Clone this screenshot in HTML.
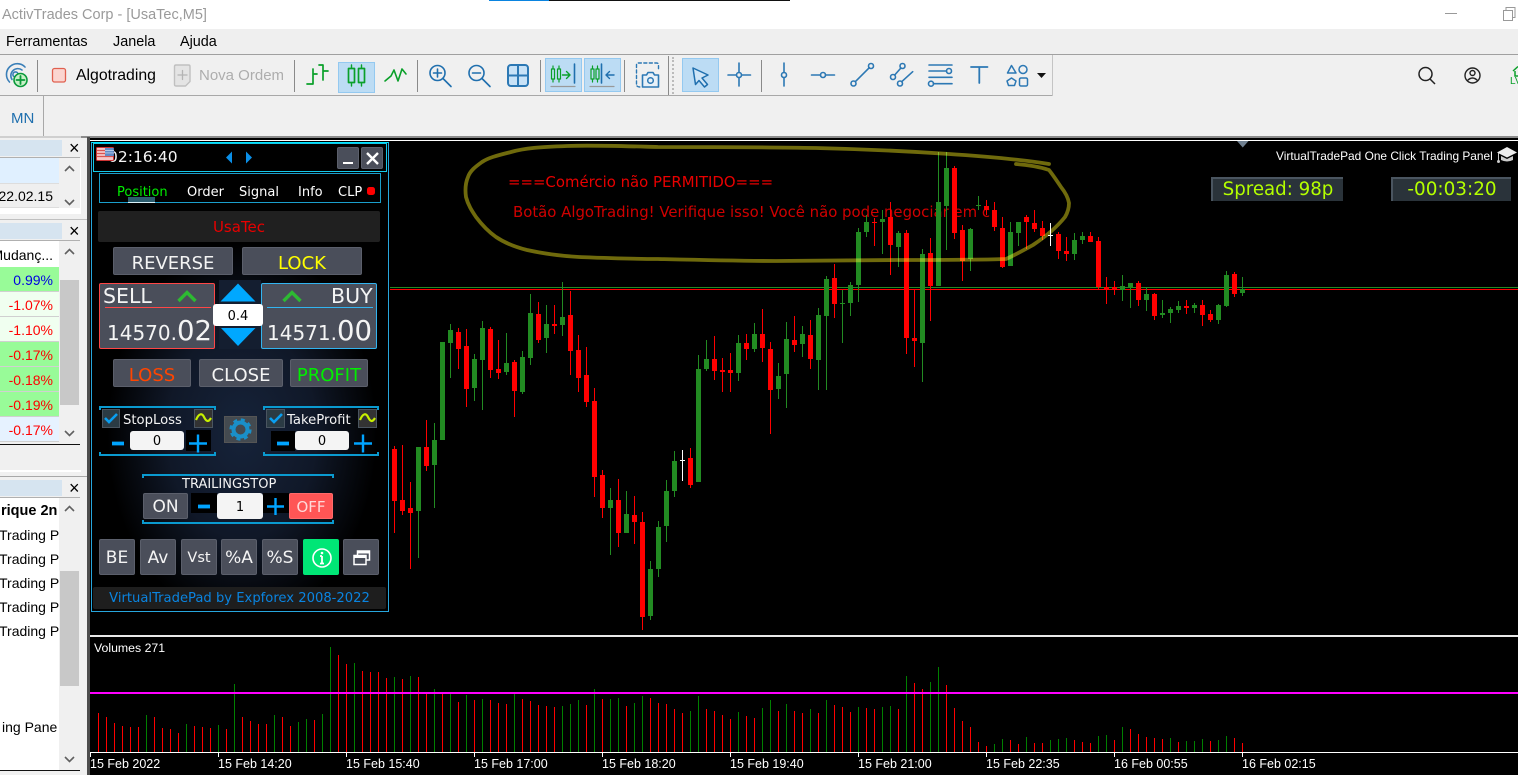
<!DOCTYPE html>
<html lang="pt"><head><meta charset="utf-8"><title>ActivTrades Corp - [UsaTec,M5]</title>
<style>
html,body{margin:0;padding:0;background:#f0f0f0;}
body{position:relative;width:1518px;height:775px;overflow:hidden;font-family:"Liberation Sans",sans-serif;font-size:14px;color:#000;}
div,span{box-sizing:border-box;}
.a{position:absolute;}
.t{position:absolute;white-space:nowrap;}
.sep{position:absolute;width:1px;background:#8a8a8a;}
.sel{position:absolute;background:#bcdcf4;border:1px solid #94c9f0;}
.row{position:absolute;left:0;width:59px;height:24px;text-align:right;padding-right:6px;padding-top:1px;line-height:24px;border-bottom:1px solid #d0d0d0;color:#f00;}
.hd{position:absolute;left:0;width:62px;height:16px;background:#d6e4f0;}
.x{position:absolute;left:69px;font-size:18px;line-height:16px;font-weight:400;}
.tr{position:absolute;left:-1px;white-space:nowrap;line-height:20px;}
.p{font-family:"DejaVu Sans",sans-serif;}
.b{position:absolute;background:#4a4e5a;border:1px solid #5b5f6b;border-radius:2px;color:#f4f4f4;display:flex;align-items:center;justify-content:center;font-family:"DejaVu Sans",sans-serif;white-space:nowrap;padding-top:2px;}
.b.h{padding-top:4px;font-size:18px;}
.w{position:absolute;background:#f4f4f4;border-radius:3px;color:#000;display:flex;align-items:center;justify-content:center;font-family:"DejaVu Sans",sans-serif;font-size:13px;padding-top:2px;}
.ax{position:absolute;top:757px;color:#fff;font-size:12.5px;line-height:15px;white-space:nowrap;}
svg{position:absolute;overflow:visible;}
</style></head><body>

<!-- title bar -->
<div class="a" style="left:0;top:0;width:1518px;height:29px;background:#fff"></div>
<div class="a" style="left:489px;top:0;width:60px;height:1px;background:#0a84e0"></div>
<div class="a" style="left:549px;top:0;width:241px;height:1px;background:#111"></div>
<div class="t" style="left:2px;top:6px;color:#9a9a9a;font-size:14.5px;line-height:18px">ActivTrades Corp - [UsaTec,M5]</div>
<div class="a" style="left:1445px;top:13px;width:12px;height:1px;background:#999"></div>
<svg style="left:1503px;top:7px" width="13" height="14"><path d="M.5 3.5h9v10h-9zM3 3V.5h9v10H10" fill="none" stroke="#999"/></svg>

<!-- menu -->
<div class="a" style="left:0;top:29px;width:1518px;height:25px;background:#efefef"></div>
<div class="t" style="left:6px;top:34px;line-height:16px;font-size:14.4px">Ferramentas</div>
<div class="t" style="left:113px;top:34px;line-height:16px;font-size:14.4px">Janela</div>
<div class="t" style="left:180px;top:34px;line-height:16px;font-size:14.4px">Ajuda</div>
<div class="a" style="left:0;top:54px;width:1518px;height:1px;background:#a0a0a0"></div>

<!-- toolbar -->
<div class="a" style="left:0;top:95px;width:1053px;height:1px;background:#a8a8a8"></div>
<div class="a" style="left:1052px;top:55px;width:1px;height:41px;background:#c4c4c4"></div>
<div class="sep" style="left:37px;top:60px;height:32px"></div>
<div class="sep" style="left:294px;top:60px;height:32px"></div>
<div class="sep" style="left:417px;top:60px;height:32px"></div>
<div class="sep" style="left:540px;top:60px;height:32px"></div>
<div class="sep" style="left:624px;top:60px;height:32px"></div>
<div class="sep" style="left:668px;top:56px;height:39px"></div>
<div class="a" style="left:672px;top:57px;height:37px;border-left:2px dotted #bbb"></div>
<div class="sep" style="left:761px;top:60px;height:32px"></div>
<div class="sel" style="left:338px;top:62px;width:37px;height:31px"></div>
<div class="sel" style="left:545px;top:58px;width:37px;height:34px"></div>
<div class="sel" style="left:584px;top:58px;width:37px;height:34px"></div>
<div class="sel" style="left:682px;top:58px;width:37px;height:34px"></div>

<svg style="left:0;top:55px" width="1053" height="41" fill="none" stroke-linecap="round" stroke-linejoin="round">
 <!-- connect -->
 <g stroke="#3a7fb8" stroke-width="1.6"><path d="M9.5 27A10.5 10.5 0 0 1 25 12"/><path d="M12 24.5A7 7 0 0 1 22 15"/><circle cx="15.5" cy="19.5" r="2.6"/></g>
 <circle cx="20.5" cy="25" r="6.5" fill="#c7f0c7" stroke="#0a9a3a" stroke-width="1.6"/><path d="M20.5 21v8M16.5 25h8" stroke="#0a9a3a" stroke-width="1.8"/>
 <!-- algotrading -->
 <rect x="52.5" y="13.5" width="13" height="13.5" rx="2" fill="#fbd5d0" stroke="#e0604f" stroke-width="1.3"/>
 <!-- nova ordem -->
 <path d="M174.5 11.5q0-1.5 1.5-1.500h12.500q1.500 0 1.500 1.500v15l-4.500 4.500h-9.500q-1.500 0-1.500-1.500z" fill="#e4e4e4" stroke="#c0c0c0" stroke-width="1.4"/><path d="M182.500 15.500v9M178 20h9" stroke="#b4b4b4" stroke-width="1.3"/>
 <!-- bars -->
 <path d="M313 14v15M307 29h6M313 19h4M323 10v15M323 16h5M319 10h4" stroke="#0aa02a" stroke-width="1.7"/>
 <!-- candles -->
 <path d="M351.500 10v21M361.500 10v21" stroke="#0aa02a" stroke-width="1.4"/><rect x="348.500" y="13.500" width="6" height="14" fill="#bcdcf4" stroke="#0aa02a" stroke-width="1.7"/><rect x="358.500" y="13.500" width="6" height="14" fill="#bcdcf4" stroke="#0aa02a" stroke-width="1.7"/>
 <!-- line -->
 <path d="M385 26l6-5 3-6 4 11 4-12 4 5" stroke="#0aa02a" stroke-width="1.6"/>
 <!-- zoom in -->
 <g stroke="#1f6fae" stroke-width="1.6"><circle cx="437.500" cy="18" r="7.500"/><path d="M443 23.500l8 8M433.500 18h8M437.500 14v8"/></g>
 <g stroke="#1f6fae" stroke-width="1.6"><circle cx="476.500" cy="18" r="7.500"/><path d="M482 23.500l8 8M472.500 18h8"/></g>
 <!-- grid -->
 <rect x="508" y="10" width="20" height="21" rx="3" fill="#c8e2f7" stroke="#2c78b4" stroke-width="2"/><path d="M518 10v21M508 20.500h20" stroke="#2c78b4" stroke-width="2"/>
 <!-- shift -->
 <g stroke="#0aa02a" stroke-width="1.2"><path d="M553 11v16M559 11v16"/><rect x="551.500" y="14" width="3" height="10" fill="#bcdcf4"/><rect x="557.500" y="14" width="3" height="10" fill="#bcdcf4"/><path d="M562.500 20h7M566.500 16.500l3.500 3.500-3.500 3.500" stroke-width="1.4"/></g>
 <path d="M574.500 9v19" stroke="#1f6fae" stroke-width="1.6"/><path d="M551 31.500h24" stroke="#999" stroke-width="1.200"/>
 <g stroke="#0aa02a" stroke-width="1.2"><path d="M592.500 11v16M597.500 11v16"/><rect x="591" y="14" width="3" height="10" fill="#bcdcf4"/><rect x="596" y="14" width="3" height="10" fill="#bcdcf4"/></g>
 <path d="M601.500 9v19" stroke="#1f6fae" stroke-width="1.6"/><path d="M606 20h8M609.500 16.500l-3.500 3.500 3.500 3.500" stroke="#1f6fae" stroke-width="1.400"/><path d="M590 31.500h24" stroke="#999" stroke-width="1.200"/>
 <!-- screenshot -->
 <path d="M636.500 29v-19q0-2 2-2h18q2 0 2 2v5M637 31q1 1 3 1" stroke="#2c78b4" stroke-width="1.400" stroke-dasharray="3 2.500"/>
 <path d="M642.500 20h4l1.500-2.500h5l1.500 2.500h4v12h-16z" fill="#e8f1f8" stroke="#2c78b4" stroke-width="1.600"/><circle cx="650.500" cy="25.500" r="2.800" stroke="#2c78b4" stroke-width="1.500"/>
 <!-- arrow -->
 <path d="M693 13l15 7-6 3 5.500 6.500-3 2.500-5.500-6.500-3.500 4z" fill="#cfe5f6" stroke="#1f6fae" stroke-width="1.500"/>
 <!-- crosshair -->
 <g stroke="#2c78b4" stroke-width="1.600"><circle cx="739" cy="20" r="2.500"/><path d="M739 8v9.500M739 22.500v8.500M728 20h8.500M741.500 20h9"/></g>
 <!-- vertical -->
 <g stroke="#2c78b4" stroke-width="1.600"><circle cx="784" cy="20" r="2.500"/><path d="M784 8v9.500M784 22.500v8.500"/></g>
 <g stroke="#2c78b4" stroke-width="1.600"><circle cx="823" cy="20" r="2.500"/><path d="M811.500 20h9M825.500 20h9"/></g>
 <g stroke="#2c78b4" stroke-width="1.600"><circle cx="853.500" cy="28.500" r="2.500"/><circle cx="871" cy="11" r="2.500"/><path d="M855.300 26.700l14-14"/></g>
 <g stroke="#2c78b4" stroke-width="1.600"><circle cx="893" cy="22" r="2.500"/><circle cx="902.500" cy="11" r="2.500"/><path d="M894.700 20l6.200-7"/><circle cx="900" cy="28.500" r="2.500"/><path d="M901.700 26.700l11-10"/></g>
 <g stroke="#2c78b4" stroke-width="1.600"><path d="M929 10h23M929 16h17.500M929 22.300h23M933.500 28.700h18.500"/><circle cx="949" cy="16" r="2.500"/><circle cx="931" cy="28.700" r="2.500"/></g>
 <path d="M971 12h16.500M979.300 12v16" stroke="#2c78b4" stroke-width="1.800"/>
 <g stroke="#2c78b4" stroke-width="1.500"><path d="M1007.500 18l4-7.500 4.500 7.500z"/><circle cx="1023" cy="14.500" r="4"/><path d="M1011.500 23l4.500 3-1.500 4.500h-6L1007 26z"/><rect x="1019.500" y="23" width="8" height="8" rx="1.500"/></g>
 <path d="M1037 18h9l-4.500 5z" fill="#111"/>
</svg>
<div class="t" style="left:76px;top:67px;font-size:15.8px;line-height:18px">Algotrading</div>
<div class="t" style="left:199px;top:67px;font-size:15px;line-height:18px;color:#adadad">Nova Ordem</div>

<!-- right icons -->
<svg style="left:1415px;top:62px" width="103" height="32" fill="none">
 <circle cx="10.500" cy="12" r="6.500" stroke="#222" stroke-width="1.500"/><path d="M15 17l5 5" stroke="#222" stroke-width="1.500"/>
 <circle cx="57.500" cy="13.500" r="7.500" stroke="#222" stroke-width="1.400"/><circle cx="57.500" cy="11" r="2.500" stroke="#222" stroke-width="1.400"/><path d="M52 19q5.500-6 11 0" stroke="#222" stroke-width="1.400"/>
 <path d="M98 9l5-4.500M100 9v5h4" stroke="#0aa02a" stroke-width="1.500"/>
</svg>
<div class="t" style="left:1510px;top:76px;font-size:10px;line-height:11px;color:#0aa02a">LV</div>

<!-- row 2 -->
<div class="sep" style="left:43px;top:96px;height:40px;background:#a8a8a8"></div>
<div class="t" style="left:11px;top:110px;font-size:15px;line-height:18px;color:#1f6fae">MN</div>
<div class="a" style="left:0;top:136px;width:1518px;height:2px;background:#8c8c8c"></div>
<div class="a" style="left:0;top:136px;width:81px;height:2px;background:#cfcfcf"></div>

<!-- left panels -->
<div class="a" style="left:0;top:138px;width:87px;height:637px;background:#f0f0f0"></div>
<div class="a" style="left:87px;top:137px;width:3px;height:638px;background:#4d4d4d"></div>

<div class="hd" style="top:140px"></div>
<div class="x" style="top:140px">×</div>
<div class="a" style="left:0;top:157px;width:80px;height:1px;background:#b0b0b0"></div>
<div class="a" style="left:0;top:158px;width:59px;height:25px;background:#e0f0ff"></div>
<div class="a" style="left:0;top:183px;width:59px;height:25px;background:#efefef;border-top:1px solid #ddd;border-bottom:1px solid #ddd"></div>
<div class="t" style="right:1465px;top:187px;line-height:18px;font-size:14px">22.02.15</div>
<div class="a" style="left:0;top:208px;width:81px;height:6px;background:#fff"></div>
<div class="a" style="left:80px;top:158px;width:1px;height:56px;background:#fff"></div>
<div class="a" style="left:0;top:219px;width:87px;height:1px;background:#c0c0c0"></div>

<div class="hd" style="top:223px"></div>
<div class="x" style="top:223px">×</div>
<div class="a" style="left:0;top:240px;width:80px;height:1px;background:#b0b0b0"></div>
<div class="a" style="left:0;top:241px;width:59px;height:26px;background:#fff"></div>
<div class="t" style="right:1465px;top:246px;line-height:18px">Mudanç...</div>
<div class="row" style="top:267px;height:25px;background:#98fb98;color:#0000e0">0.99%</div>
<div class="row" style="top:292px;height:25px;background:#f0fff0">-1.07%</div>
<div class="row" style="top:317px;height:25px;background:#f0fff0">-1.10%</div>
<div class="row" style="top:342px;height:25px;background:#98fb98">-0.17%</div>
<div class="row" style="top:367px;height:25px;background:#98fb98">-0.18%</div>
<div class="row" style="top:392px;height:25px;background:#98fb98">-0.19%</div>
<div class="row" style="top:417px;height:25px;background:#e6f2ff">-0.17%</div>
<div class="a" style="left:60px;top:280px;width:19px;height:125px;background:#c8c8c8"></div>
<div class="a" style="left:0;top:444px;width:80px;height:1px;background:#111"></div>
<div class="a" style="left:0;top:470px;width:81px;height:2px;background:#fff"></div>
<div class="a" style="left:0;top:476px;width:87px;height:1px;background:#a8a8a8"></div>

<div class="hd" style="top:480px"></div>
<div class="x" style="top:480px">×</div>
<div class="a" style="left:0;top:497px;width:80px;height:1px;background:#b0b0b0"></div>
<div class="a" style="left:0;top:498px;height:272px;background:#fff;overflow:hidden;width:59px">
 <div class="tr" style="left:1px;top:3px;font-weight:700;font-size:14.500px">rique 2n</div>
 <div class="tr" style="top:27px">Trading Panel</div>
 <div class="tr" style="top:51px">Trading Panel</div>
 <div class="tr" style="top:75px">Trading Panel</div>
 <div class="tr" style="top:99px">Trading Panel</div>
 <div class="tr" style="top:123px">Trading Panel</div>
 <div class="tr" style="left:2px;top:219px;width:56px;overflow:hidden">ing Panel</div>
</div>
<div class="a" style="left:60px;top:571px;width:19px;height:115px;background:#c8c8c8"></div>
<div class="a" style="left:0;top:770px;width:80px;height:1px;background:#111"></div>
<svg style="left:0;top:0" width="87" height="775" fill="none" stroke="#606060" stroke-width="1.600">
 <path d="M65 171l4.500-4.500 4.500 4.500M65 200l4.500 4.500 4.500-4.500M65 254l4.500-4.500 4.500 4.500M65 431l4.500 4.500 4.500-4.500M65 511l4.500-4.500 4.500 4.500M65 757l4.500 4.500 4.500-4.500"/>
</svg>

<!-- chart -->
<div class="a" style="left:90px;top:138px;width:1428px;height:637px;background:#000"></div>
<div class="a" style="left:90px;top:140px;width:1428px;height:1px;background:#fff"></div>
<div class="a" style="left:90px;top:635px;width:1428px;height:2px;background:#e8e8e8"></div>

<div class="t p" style="left:508px;top:173px;color:#e80000;font-size:14.900px;line-height:18px">===Comércio não PERMITIDO===</div>
<div class="t p" style="left:513px;top:203px;color:#d00000;font-size:14.900px;line-height:18px">Botão AlgoTrading! Verifique isso! Você não pode negociar em c</div>

<svg style="left:0;top:0" width="1518" height="775" fill="none" shape-rendering="crispEdges">
 <path d="M390 287.500H1518" stroke="#228b22"/><path d="M390 289.500H1518" stroke="#f00"/>
 <path stroke="#f00" d="M394.500 446V533M402.500 445V515M410.500 482V569M426.500 420V471M458.500 328V369M466.500 329V407M490.500 327V378M498.500 340V379M514.500 360V417M538.500 302V343M554.500 305V334M570.500 291V375M578.500 335V392M586.500 347V407M594.500 388V497M602.500 470V518M618.500 479V547M634.500 496V544M642.500 512V630M690.500 448V488M714.500 336V380M722.500 358V392M730.500 353V392M746.500 334V360M762.500 309V362M770.500 342V434M794.500 316V352M810.500 320V369M834.500 264V318M874.500 218V246M890.500 202V275M906.500 230V354M914.500 290V367M930.500 238V321M954.500 166V239M962.500 225V281M986.500 200V215M994.500 202V231M1002.500 217V268M1026.500 215V249M1034.500 210V232M1042.500 221V240M1058.500 232V259M1066.500 237V261M1090.500 232V242M1098.500 237V289M1106.500 277V304M1114.500 281V295M1138.500 281V306M1154.500 293V320M1186.500 300V314M1202.500 300V326M1210.500 310V322M1234.500 272V297"/>
 <path stroke="#228b22" d="M418.500 447V558M434.500 423V508M450.500 324V378M474.500 354V401M482.500 321V410M506.500 333V375M522.500 351V394M530.500 294V365M546.500 305V353M562.500 282V336M610.500 488V555M626.500 491V533M650.500 561V620M658.500 521V577M666.500 480V542M674.500 451V497M698.500 355V482M706.500 340V371M738.500 335V381M754.500 323V352M778.500 363V399M786.500 322V408M802.500 326V357M818.500 308V390M826.500 276V390M842.500 290V343M850.500 282V316M858.500 228V302M866.500 215V237M882.500 210V254M898.500 231V267M922.500 249V382M938.500 152V286M946.500 152V250M970.500 228V271M978.500 196V210M1010.500 222V266M1018.500 222V246M1074.500 233V260M1082.500 232V244M1122.500 275V301M1130.500 283V308M1146.500 288V311M1162.500 300V318M1170.500 307V323M1178.500 301V313M1194.500 303V313M1218.500 304V324M1226.500 271V307M1242.500 277V296"/>
 <path stroke="#f00" stroke-width="5" d="M394.500 449V501M402.500 500V511M410.500 508V513M426.500 447V466M458.500 332V349M466.500 346V389M490.500 329V370M498.500 369V373M514.500 362V391M538.500 314V340M554.500 324V326M570.500 315V351M578.500 350V378M586.500 375V402M594.500 401V477M602.500 475V508M618.500 500V533M634.500 515V522M642.500 522V617M690.500 458V485M714.500 359V371M722.500 370V372M730.500 370V373M746.500 343V349M762.500 334V348M770.500 349V390M794.500 340V345M810.500 335V359M834.500 278V304M874.500 222V223M890.500 217V245M906.500 233V338M914.500 338V341M930.500 253V286M954.500 168V233M962.500 230V261M986.500 206V210M994.500 210V227M1002.500 228V267M1026.500 217V222M1034.500 223V229M1042.500 228V236M1058.500 234V251M1066.500 251V254M1090.500 236V242M1098.500 241V287M1106.500 287V289M1114.500 287V289M1138.500 283V300M1154.500 294V316M1186.500 306V308M1202.500 305V315M1210.500 314V320M1234.500 274V294"/>
 <path stroke="#228b22" stroke-width="5" d="M418.500 447V511M434.500 440V465M442.500 342V440M450.500 330V343M474.500 359V388M482.500 328V360M506.500 363V372M522.500 357V392M530.500 313V358M546.500 324V338M562.500 317V325M610.500 500V508M626.500 514V533M650.500 569V616M658.500 527V569M666.500 491V526M674.500 461V491M698.500 369V482M706.500 359V369M738.500 343V373M754.500 334V349M778.500 376V389M786.500 339V374M802.500 334V344M818.500 315V360M826.500 279V316M842.500 303V304M850.500 285V303M858.500 232V285M866.500 222V232M882.500 219V222M898.500 233V247M922.500 254V343M938.500 202V286M946.500 168V206M970.500 229V259M978.500 205V206M1010.500 232V266M1018.500 222V233M1074.500 240V254M1082.500 236V240M1122.500 286V290M1130.500 283V288M1146.500 294V300M1162.500 313V315M1170.500 309V313M1178.500 306V310M1194.500 305V308M1218.500 305V320M1226.500 275V306M1242.500 289V293"/>
 <path stroke="#fff" d="M682.500 450V481M680 460.500H685M1050.500 223V246M1048 235.500H1053"/>
 <!-- volumes -->
 <path stroke="#f00" d="M98.500 713V752M106.500 717V752M114.500 723V752M122.500 726V752M130.500 727V752M138.500 727V752M154.500 717V752M162.500 728V752M170.500 729V752M178.500 733V752M194.500 726V752M202.500 727V752M210.500 728V752M226.500 729V752M242.500 717V752M250.500 721V752M258.500 724V752M266.500 724V752M282.500 717V752M290.500 726V752M314.500 720V752M338.500 655V752M346.500 664V752M362.500 671V752M370.500 672V752M378.500 672V752M386.500 678V752M402.500 679V752M418.500 677V752M426.500 693V752M442.500 693V752M458.500 702V752M474.500 700V752M490.500 700V752M498.500 703V752M506.500 704V752M522.500 699V752M530.500 701V752M538.500 705V752M546.500 706V752M554.500 707V752M586.500 705V752M602.500 699V752M626.500 706V752M650.500 698V752M658.500 703V752M666.500 704V752M674.500 709V752M682.500 713V752M706.500 709V752M714.500 711V752M722.500 715V752M730.500 719V752M746.500 716V752M754.500 718V752M778.500 711V752M794.500 711V752M802.500 713V752M818.500 713V752M834.500 705V752M842.500 707V752M850.500 712V752M866.500 708V752M874.500 709V752M898.500 709V752M914.500 683V752M922.500 689V752M946.500 685V752M954.500 708V752M962.500 721V752M970.500 727V752M978.500 742V752M986.500 746V752M1010.500 740V752M1018.500 744V752M1034.500 743V752M1042.500 743V752M1074.500 740V752M1082.500 742V752M1090.500 743V752M1114.500 740V752M1130.500 729V752M1138.500 734V752M1146.500 737V752M1154.500 738V752M1162.500 739V752M1178.500 742V752M1210.500 741V752M1234.500 738V752M1242.500 743V752"/>
 <path stroke="#008000" d="M146.500 715V752M186.500 724V752M218.500 725V752M234.500 684V752M274.500 715V752M298.500 722V752M306.500 719V752M322.500 714V752M330.500 647V752M354.500 663V752M394.500 677V752M410.500 676V752M434.500 689V752M450.500 694V752M466.500 695V752M482.500 699V752M514.500 694V752M562.500 706V752M570.500 704V752M578.500 700V752M594.500 689V752M610.500 699V752M618.500 698V752M634.500 703V752M642.500 696V752M690.500 711V752M698.500 696V752M738.500 712V752M762.500 708V752M770.500 700V752M786.500 704V752M810.500 709V752M826.500 700V752M858.500 707V752M882.500 707V752M890.500 706V752M906.500 676V752M930.500 682V752M938.500 667V752M994.500 744V752M1002.500 739V752M1026.500 737V752M1050.500 740V752M1058.500 739V752M1066.500 738V752M1098.500 736V752M1106.500 735V752M1122.500 727V752M1170.500 738V752M1186.500 741V752M1194.500 741V752M1202.500 739V752M1218.500 740V752M1226.500 736V752"/>
 <path stroke="#f0f" stroke-width="2" d="M90 693H1518"/>
 <path stroke="#fff" d="M90 752.500H1518M90.500 752V757M218.500 752V757M346.500 752V757M474.500 752V757M602.500 752V757M730.500 752V757M858.500 752V757M986.500 752V757M1114.500 752V757M1242.500 752V757"/>
</svg>

<!-- marker ellipse -->
<svg style="left:0;top:0;mix-blend-mode:screen" width="1518" height="775" fill="none">
 <path d="M1049,164 C1000,156 900,150 816,148 C760,147 700,147 658,147 C620,146 590,145 567,146 C540,147 525,148 511,152 C495,156 488,158 482,162 C475,167 470,171 468,177 C465,184 465,190 466,197 C468,205 472,211 476,217 C482,225 489,232 496,237 C505,243 515,247 527,250 C545,254 560,256 579,257 C605,258 630,259 658,259 C700,260 740,261 776,261 C820,261 860,260 895,260 C930,260 975,260 1006,259 C1015,255 1024,250 1033,245 C1045,237 1057,227 1065,217 C1068,212 1069,208 1069,203 C1068,197 1065,192 1061,187 C1057,181 1053,175 1049,170 C1040,167 1028,165 1016,164" stroke="#6f6a0c" stroke-width="3.800" stroke-linecap="round"/>
</svg>

<!-- chart labels -->
<svg style="left:1237px;top:141px" width="12" height="7"><path d="M0 0h11.500L5.750 6.500z" fill="#708090"/></svg>
<div class="t" style="left:1276px;top:148px;color:#fff;font-size:11.900px;line-height:16px">VirtualTradePad One Click Trading Panel</div>
<svg style="left:1497px;top:146px" width="21" height="18"><path d="M0 6.500L10 1l10 5.500-10 5z" fill="#eee"/><path d="M4 10v4q6 3 12 0v-4l-6 3z" fill="#ccc"/><path d="M1.500 7v8" stroke="#ccc"/><circle cx="1.500" cy="15.500" r="1.500" fill="#ccc"/></svg>
<div class="a p" style="left:1211px;top:177px;width:132px;height:24px;background:#2a333a;border-left:2px solid #4a5560;border-top:2px solid #4a5560;color:#b4ff00;font-size:18.200px;line-height:22px;text-align:center;white-space:nowrap">Spread: 98p</div>
<div class="a p" style="left:1391px;top:177px;width:120px;height:24px;background:#2a333a;border-left:2px solid #4a5560;border-top:2px solid #4a5560;color:#b4ff00;font-size:18.400px;line-height:22px;text-align:center;white-space:nowrap">-00:03:20</div>
<div class="t" style="left:94px;top:641px;color:#fff;font-size:12.300px;line-height:15px">Volumes 271</div>
<div class="ax" style="left:90px">15 Feb 2022</div>
<div class="ax" style="left:218px">15 Feb 14:20</div>
<div class="ax" style="left:346px">15 Feb 15:40</div>
<div class="ax" style="left:474px">15 Feb 17:00</div>
<div class="ax" style="left:602px">15 Feb 18:20</div>
<div class="ax" style="left:730px">15 Feb 19:40</div>
<div class="ax" style="left:858px">15 Feb 21:00</div>
<div class="ax" style="left:986px">15 Feb 22:35</div>
<div class="ax" style="left:1114px">16 Feb 00:55</div>
<div class="ax" style="left:1242px">16 Feb 02:15</div>

<!-- trade panel -->
<div class="a" style="left:91px;top:142px;width:298px;height:470px;background:radial-gradient(ellipse 135px 190px at 150px 290px,#16233a 0%,#101828 55%,#000 100%);border:1px solid #27a6dd;border-top-color:#00e5ff"></div>
<div class="a" style="left:93px;top:143px;width:294px;height:29px;background:#000;border:1px solid #14c8e8"></div>
<div class="t p" style="left:108px;top:148px;color:#f4f4f4;font-size:15.500px;line-height:19px">02:16:40</div>
<svg style="left:96px;top:147px" width="19" height="14"><rect x=".5" y=".5" width="17" height="13" rx="1" fill="#f6c6c6" stroke="#c33"/><path d="M1 3.500h16M1 6.500h16M1 9.500h16" stroke="#d9534f" stroke-width="1.200"/><rect x="9" y="1" width="9" height="8" fill="#3b7fc9" opacity=".8"/><path d="M9 3.500h9M9 6h9" stroke="#cfe3f7" stroke-width=".8"/></svg>
<svg style="left:226px;top:151px" width="28" height="13"><path d="M6 .5v12L0 6.500zM20 .5v12l6-6z" fill="#0a8fe8"/></svg>
<div class="b" style="left:337px;top:147px;width:22px;height:22px"><svg style="left:5px;top:14px" width="11" height="3"><rect width="10" height="2" fill="#fff"/></svg></div>
<div class="b" style="left:361px;top:147px;width:22px;height:22px"><svg style="left:4px;top:4px" width="13" height="13"><path d="M1 1l11 11M12 1L1 12" stroke="#fff" stroke-width="2.400"/></svg></div>

<div class="a" style="left:99px;top:173px;width:282px;height:30px;border:1px solid #1a9ecb"></div>
<div class="a" style="left:128px;top:197px;width:27px;height:5px;background:#2b5c6e"></div>
<div class="a" style="left:128px;top:202px;width:27px;height:1px;background:#d8f0f8"></div>
<div class="t p" style="left:117px;top:185px;color:#00ee00;font-size:13px;line-height:16px">Position</div>
<div class="t p" style="left:187px;top:185px;color:#fff;font-size:13px;line-height:16px">Order</div>
<div class="t p" style="left:239px;top:185px;color:#fff;font-size:13px;line-height:16px">Signal</div>
<div class="t p" style="left:298px;top:185px;color:#fff;font-size:13px;line-height:16px">Info</div>
<div class="t p" style="left:338px;top:185px;color:#fff;font-size:13px;line-height:16px">CLP</div>
<div class="a" style="left:367px;top:187px;width:8px;height:8px;background:#f00;border-radius:2.500px"></div>

<div class="a p" style="left:98px;top:211px;width:282px;height:31px;background:#202020;border-radius:2px;color:#e80000;font-size:15px;line-height:33px;text-align:center">UsaTec</div>

<div class="b h" style="left:113px;top:247px;width:120px;height:28px">REVERSE</div>
<div class="b h" style="left:242px;top:247px;width:120px;height:28px;color:#ffff00">LOCK</div>

<div class="a" style="left:219px;top:280px;width:42px;height:69px;background:#141e30"></div>
<div class="a" style="left:99px;top:283px;width:116px;height:66px;background:#4a4e5a;border:1px solid #ff4646;border-radius:2px"></div>
<div class="a" style="left:261px;top:283px;width:116px;height:66px;background:#4a4e5a;border:1px solid #32b4f0;border-radius:2px"></div>
<div class="a" style="left:105px;top:307px;width:106px;height:1px;background:#ff4646"></div>
<div class="a" style="left:267px;top:307px;width:106px;height:1px;background:#32b4f0"></div>
<svg style="left:0;top:0" width="400" height="360" fill="none"><path d="M178.500 301l8.500-8.500 8.500 8.500M283.500 301l8.500-8.500 8.500 8.500" stroke="#2dba32" stroke-width="3.400"/><path d="M238 283.500L255.500 301.500H220.500z" fill="#00a8ff"/><path d="M221 328H255.500L238 346z" fill="#00a8ff"/></svg>
<div class="t p" style="left:103px;top:284px;color:#f4f4f4;font-size:20.500px;line-height:25px">SELL</div>
<div class="t p" style="left:331px;top:284px;color:#f4f4f4;font-size:20.500px;line-height:25px">BUY</div>
<div class="t p" style="left:107px;top:314px;color:#f4f4f4;font-size:20px;line-height:34px">14570.<span style="font-size:27.500px">02</span></div>
<div class="t p" style="left:267px;top:314px;color:#f4f4f4;font-size:20px;line-height:34px">14571.<span style="font-size:27.500px">00</span></div>
<div class="w" style="left:213px;top:304px;width:50px;height:22px;background:#fff">0.4</div>

<div class="b h" style="left:113px;top:359px;width:78px;height:28px;color:#ff4500">LOSS</div>
<div class="b h" style="left:199px;top:359px;width:84px;height:28px">CLOSE</div>
<div class="b h" style="left:290px;top:359px;width:78px;height:28px;color:#00ee00">PROFIT</div>

<!-- stop / take -->
<svg style="left:0;top:0" width="400" height="540" fill="none" stroke="#0a9ad0" stroke-width="2">
 <path d="M100 410v-3h115v3M100 452v3h115v-3M264 410v-3h114v3M264 452v3h114v-3M143 478v-3h190v3M143 520v3h190v-3"/>
</svg>
<div class="a" style="left:102px;top:409px;width:18px;height:19px;background:#2b3b44;border:1px solid #4a5560"></div>
<div class="a" style="left:266px;top:409px;width:19px;height:19px;background:#2b3b44;border:1px solid #4a5560"></div>
<div class="a" style="left:194px;top:409px;width:19px;height:19px;background:#333;border:1px solid #4a5560"></div>
<div class="a" style="left:358px;top:409px;width:19px;height:19px;background:#333;border:1px solid #4a5560"></div>
<svg style="left:0;top:0" width="400" height="540" fill="none">
 <path d="M105 418l4 4 8-8M270 418l4 4 8-8" stroke="#0a9ef0" stroke-width="2.600"/>
 <path d="M196 420c3-7 6-7 8-3s4 6 7 1M360 420c3-7 6-7 8-3s4 6 7 1" stroke="#c8f000" stroke-width="2.200"/>
</svg>
<div class="t p" style="left:123px;top:413px;color:#f4f4f4;font-size:13.200px;line-height:16px">StopLoss</div>
<div class="t p" style="left:287px;top:413px;color:#f4f4f4;font-size:13.200px;line-height:16px">TakeProfit</div>
<div class="a" style="left:186px;top:430px;width:25px;height:21px;background:#000"></div>
<div class="a" style="left:271px;top:431px;width:24px;height:20px;background:#000"></div>
<svg style="left:0;top:0" width="400" height="540" stroke="#00a4ff" fill="none">
 <path d="M112 443.500h12M277 443.500h12" stroke-width="3.800"/>
 <path d="M189 443.500h18M198 434.500v18M354 443.500h18M363 434.500v18" stroke-width="2.400"/>
</svg>
<div class="w" style="left:130px;top:431px;width:54px;height:19px">0</div>
<div class="w" style="left:295px;top:431px;width:54px;height:19px">0</div>
<div class="a" style="left:224px;top:416px;width:33px;height:27px;background:#444a50;border:1px solid #555"></div>
<svg style="left:227px;top:417px" width="27" height="25" fill="none"><circle cx="13.500" cy="12.500" r="7" stroke="#1a8fc8" stroke-width="4"/><circle cx="13.500" cy="12.500" r="9.800" stroke="#1a8fc8" stroke-width="2.600" stroke-dasharray="4 3.700"/></svg>

<div class="t p" style="left:182px;top:477px;color:#f4f4f4;font-size:13px;line-height:16px">TRAILINGSTOP</div>
<div class="a" style="left:191px;top:493px;width:26px;height:20px;background:#000"></div>
<div class="a" style="left:263px;top:493px;width:26px;height:20px;background:#000"></div>
<svg style="left:0;top:0" width="400" height="540" stroke="#00a4ff" fill="none"><path d="M198 506.500h12" stroke-width="3.800"/><path d="M267 506.500h17M275.500 498v17" stroke-width="2.400"/></svg>
<div class="b" style="left:143px;top:493px;width:45px;height:26px;font-size:17px">ON</div>
<div class="w" style="left:217px;top:493px;width:46px;height:26px">1</div>
<div class="b" style="left:289px;top:493px;width:44px;height:26px;font-size:15px;background:#ff5555;border-color:#ff6a6a;color:#ffd8d8">OFF</div>

<div class="b" style="left:99px;top:539px;width:36px;height:36px;font-size:17px">BE</div>
<div class="b" style="left:140px;top:539px;width:36px;height:36px;font-size:17px">Av</div>
<div class="b" style="left:181px;top:539px;width:36px;height:36px;font-size:14.500px">Vst</div>
<div class="b" style="left:221px;top:539px;width:36px;height:36px;font-size:17px">%A</div>
<div class="b" style="left:262px;top:539px;width:36px;height:36px;font-size:17px">%S</div>
<div class="b" style="left:303px;top:539px;width:36px;height:36px;background:#00e676;border-color:#00e676"><svg style="left:7px;top:7px" width="22" height="22" fill="none"><circle cx="11" cy="11" r="9" stroke="#fff" stroke-width="1.600"/><path d="M11 9v7M9 9h2M9 16.500h4" stroke="#fff" stroke-width="1.800"/><circle cx="11" cy="6" r="1.300" fill="#fff"/></svg></div>
<div class="b" style="left:343px;top:539px;width:36px;height:36px"><svg style="left:9px;top:10px" width="18" height="16" fill="none"><rect x="4.500" y="1" width="12" height="9" stroke="#fff" stroke-width="1.500"/><rect x="1" y="5.500" width="12" height="9" fill="#4a4e5a" stroke="#fff" stroke-width="1.500"/><path d="M1 7h12M4.500 2.500h12" stroke="#fff" stroke-width="2"/></svg></div>
<div class="a p" style="left:93px;top:587px;width:293px;height:22px;background:#1e1e1e;border-radius:2px;color:#0a84e0;font-size:13.150px;line-height:24px;text-align:center;white-space:nowrap">VirtualTradePad by Expforex 2008-2022</div>

</body></html>
